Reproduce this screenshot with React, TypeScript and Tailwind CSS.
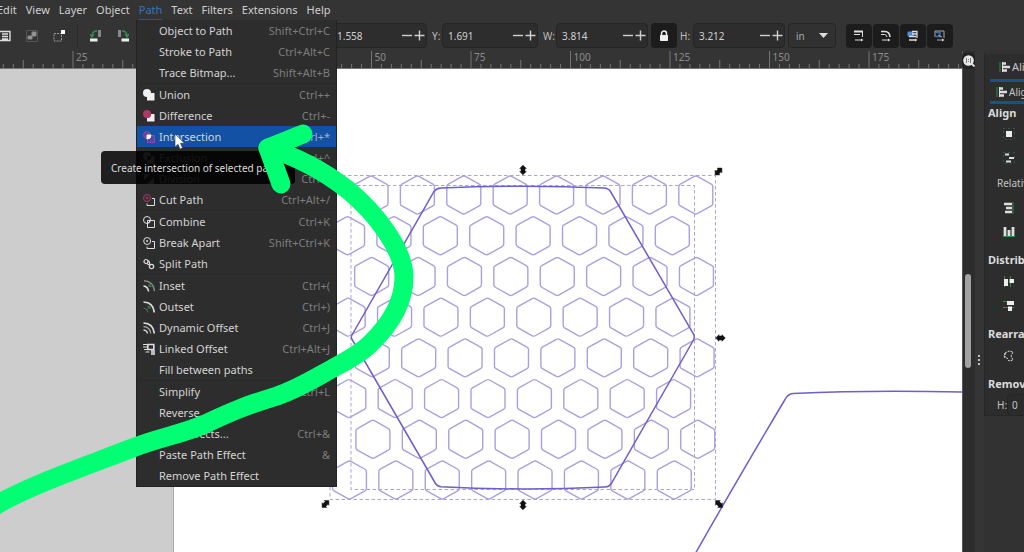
import type { ReactNode } from "react";

const SOFT = "#dedede";
const PINK = "#b03868";
const GREEN = "#2f8f4a";

function Icon({ children, className = "" }: { children: ReactNode; className?: string }) {
  return (
    <svg viewBox="0 0 12 12" width="12" height="12" fill="none" stroke={SOFT} className={"shrink-0 " + className} aria-hidden="true">
      {children}
    </svg>
  );
}

const menuIcons: Record<string, ReactNode> = {
  Union: (
    <g fill="#f0f0f0" stroke="none">
      <circle cx="4" cy="4" r="4" />
      <rect x="4" y="4" width="7.5" height="7.5" />
    </g>
  ),
  Difference: (
    <g stroke="none">
      <path d="M8 4h3.500v7.500h-7.500v-3.500q4 0 4-4z" fill="#f0f0f0" />
      <circle cx="4" cy="4" r="4" fill={PINK} />
    </g>
  ),
  Intersection: (
    <g>
      <circle cx="4" cy="4" r="3.500" fill="#6b3f9c" stroke="#a84a9c" strokeDasharray="2 .6" />
      <path d="M8.500 4.500h3v7h-7v-3" fill="#4a4aa8" stroke="#a84a9c" strokeDasharray="2 .6" />
      <path d="M4 4h4q0 4-4 4z" fill="#fff" stroke="#fff" />
    </g>
  ),
  Exclusion: (
    <g stroke="none" fill="#8a8a8a">
      <path d="M4 0a4 4 0 0 1 4 4h-4v4a4 4 0 0 1 0-8z" />
      <path d="M8.500 4h3v7.500h-7.500v-3q4.500 0 4.500-4.500z" />
    </g>
  ),
  Division: (
    <g stroke="none" fill="#8a8a8a">
      <path d="M1 1h6l-6 6zM11 4v7h-7z" />
    </g>
  ),
  "Cut Path": (
    <g>
      <circle cx="4" cy="4" r="3.500" stroke={PINK} />
      <circle cx="4" cy="4" r="1" stroke={PINK} />
      <path d="M9 4.500h2.500v7h-7.500v-2" />
    </g>
  ),
  Combine: (
    <g>
      <circle cx="4" cy="4" r="3.500" />
      <path d="M4.500 4.500h7v7h-7z" />
      <path d="M4.500 7.500l3-3" />
    </g>
  ),
  "Break Apart": (
    <g>
      <circle cx="4.200" cy="4" r="3.500" />
      <circle cx="4.200" cy="4" r=".7" />
      <path d="M9 4.500h2.500v7h-7.500v-2" />
    </g>
  ),
  "Split Path": (
    <g strokeWidth="1.200">
      <circle cx="3" cy="3.500" r="2" />
      <circle cx="8.500" cy="8.500" r="2.200" />
      <path d="M5 2.500q2 1 1.500 4M3.500 5.500l3 1.500" />
    </g>
  ),
  Inset: (
    <g>
      <path d="M1 .8q9.500.5 10.500 10.500" stroke="#858585" strokeWidth="1.400" />
      <path d="M.5 6q4.500.5 5 5.500" strokeWidth="1.600" />
      <path d="M9 3.500l-3 3m0-2.500v2.500h2.500" stroke={GREEN} />
    </g>
  ),
  Outset: (
    <g>
      <path d="M.5 1q10 .5 10.800 10.500" strokeWidth="1.600" />
      <path d="M.5 7q4 .5 4.500 4.500" stroke="#666" />
      <path d="M4 8.500l3-3m0 2.500v-2.500h-2.500" stroke={GREEN} />
    </g>
  ),
  "Dynamic Offset": (
    <g>
      <path d="M.5 1q10 .5 10.800 10.500" strokeWidth="1.600" />
      <path d="M.5 4.500q6.500.5 7.300 7" stroke="#a5a5a5" strokeWidth="1.300" />
      <path d="M.5 8q3.500.3 4 3.500" strokeWidth="1.300" />
    </g>
  ),
  "Linked Offset": (
    <g>
      <path d="M4.800 1.500h6v5h-6zM9 7v5M11 7v5" strokeWidth="1.600" />
      <path d="M0 1.500h4M0 4h4M1 6.500h4M2.500 9h4" />
    </g>
  ),
};

type Entry = { label: string; keys?: string; dim?: boolean; active?: boolean };

const menuGroups: Entry[][] = [
  [
    { label: "Object to Path", keys: "Shift+Ctrl+C" },
    { label: "Stroke to Path", keys: "Ctrl+Alt+C" },
    { label: "Trace Bitmap...", keys: "Shift+Alt+B" },
  ],
  [
    { label: "Union", keys: "Ctrl++" },
    { label: "Difference", keys: "Ctrl+-" },
    { label: "Intersection", keys: "Ctrl+*", active: true },
    { label: "Exclusion", keys: "Ctrl+^", dim: true },
    { label: "Division", keys: "Ctrl+/", dim: true },
    { label: "Cut Path", keys: "Ctrl+Alt+/" },
  ],
  [
    { label: "Combine", keys: "Ctrl+K" },
    { label: "Break Apart", keys: "Shift+Ctrl+K" },
    { label: "Split Path" },
  ],
  [
    { label: "Inset", keys: "Ctrl+(" },
    { label: "Outset", keys: "Ctrl+)" },
    { label: "Dynamic Offset", keys: "Ctrl+J" },
    { label: "Linked Offset", keys: "Ctrl+Alt+J" },
    { label: "Fill between paths" },
  ],
  [
    { label: "Simplify", keys: "Ctrl+L" },
    { label: "Reverse" },
    { label: "Path Effects...", keys: "Ctrl+&" },
    { label: "Paste Path Effect", keys: "&" },
    { label: "Remove Path Effect" },
  ],
];

function PathMenu() {
  return (
    <div role="menu" aria-label="Path" className="absolute left-[136px] top-5 z-10 w-[201px] border-x border-b border-[#222] bg-[#2d2d2d]">
      {menuGroups.map((group, i) => (
        <div key={i} className={i > 0 ? "border-t border-[#292929]" : ""}>
          {group.map((e) => (
            <button
              key={e.label}
              role="menuitem"
              className={
                "flex h-[21px] w-full items-center pl-1.5 pr-1.5 text-left " +
                (e.active ? "bg-[#1251a3]" : "")
              }
            >
              <span className="w-4 shrink-0">{menuIcons[e.label] && <Icon>{menuIcons[e.label]}</Icon>}</span>
              <span className={"flex-1 whitespace-nowrap " + (e.dim ? "text-[#8a8a8a]" : "text-[#d4d4d4]")}>{e.label}</span>
              <span className={e.active ? "text-[#9ab0cc]" : "text-[#7d7d7d]"}>{e.keys}</span>
            </button>
          ))}
        </div>
      ))}
    </div>
  );
}

function SpinBox({ id, label, value, wide = false }: { id: string; label: string; value: string; wide?: boolean }) {
  return (
    <div className="flex items-center">
      <label htmlFor={id} className={"whitespace-nowrap text-[#bdbdbd] " + (wide ? "w-[10px]" : "w-[13px]")}>{label}</label>
      <div className={"flex h-[25px] items-center rounded border border-[#252525] bg-[#2d2d2d] " + (wide ? "w-[96px]" : "w-[92px]")}>
        <input id={id} defaultValue={value} className="w-0 flex-1 bg-transparent pl-[5px] text-[#d0d0d0] outline-none" />
        <button aria-label={"Decrease " + label} className="flex h-full w-3 items-center justify-center">
          <svg width="11" height="11" stroke="#cfcfcf" strokeWidth="1.400" aria-hidden="true"><path d="M0 5.500h10" /></svg>
        </button>
        <button aria-label={"Increase " + label} className="flex h-full w-[13px] items-center justify-center">
          <svg width="11" height="11" stroke="#cfcfcf" strokeWidth="1.400" aria-hidden="true"><path d="M.5 5.500h10M5.500 .5v10" /></svg>
        </button>
      </div>
    </div>
  );
}

const scaleIcons: { name: string; art: ReactNode }[] = [
  { name: "Scale stroke width", art: <><path d="M1 1.500h9" strokeWidth="2" /><path d="M1 4.500h6M9.500 2v5M2 10h7" /></> },
  { name: "Scale rounded corners", art: <><path d="M1 1.500h4q4.500 0 5 5.500" strokeWidth="1.600" /><path d="M1 4.500h3.500q2 0 2.500 2.500M2 10h7" /></> },
  { name: "Move gradients", art: <><path d="M1 2h5v4h-5z" fill="#4f8de0" stroke="#4f8de0" /><path d="M5 1.500h5.500M5 4h5M2 6.500h7M10 1v7M2 10h7" strokeWidth="1.300" /></> },
  { name: "Move patterns", art: <><path d="M2 2.500h4v4h-4" stroke="#3d6fb5" strokeWidth="1.500" /><path d="M1 1h9v7M1 1v6M3 10h6M4 5l4 2" stroke="#aaa" /></> },
];

function Toolbar() {
  return (
    <div className="flex h-[31px] items-center overflow-hidden bg-[#343434] text-[10px]">
      <div className="flex w-[321px] shrink-0 items-center">
        <button aria-label="Select all" className="flex w-[19px] justify-center pr-2">
          <Icon><path d="M0 1.500h10v9h-10M2 4h6M2 6.500h6M2 9h6" strokeWidth="1.400" /></Icon>
        </button>
        <button aria-label="Select in layers" className="flex w-[26px] justify-center">
          <Icon>
            <path d="M.5 .5h11v11h-11z" stroke="#555" />
            <path d="M6 2h4v4h-4zM2 6h4v3h-4z" fill="#999" stroke="#888" />
          </Icon>
        </button>
        <button aria-label="Deselect" className="flex w-[27px] justify-center">
          <Icon>
            <path d="M1 3.500h7.500v7.500h-7.500z" stroke="#999" strokeDasharray="2 1" />
            <path d="M8 0h4v4h-4z" fill="#fff" stroke="none" />
          </Icon>
        </button>
        <span className="ml-[5px] h-6 border-l border-[#2b2b2b]" />
        <button aria-label="Rotate left" className="ml-3 flex w-3 justify-center">
          <Icon>
            <path d="M8 0h3v7h-3z" fill="#888" stroke="none" />
            <path d="M7 1q-5 0-5 5M0 4l2 3 2-3" stroke={GREEN} strokeWidth="1.300" />
            <path d="M0 8.500h7.500v3h-7.500z" fill="#eee" stroke="none" />
          </Icon>
        </button>
        <button aria-label="Rotate right" className="ml-[15px] flex w-3 justify-center">
          <Icon>
            <path d="M1 0h3v7h-3z" fill="#888" stroke="none" />
            <path d="M5 1q5 0 5 5M8 4l2 3 2-3" stroke={GREEN} strokeWidth="1.300" />
            <path d="M4.500 8.500h7.500v3h-7.500z" fill="#eee" stroke="none" />
          </Icon>
        </button>
      </div>
      <div className="flex shrink-0 items-center">
        <div className="flex gap-[5px]">
          <SpinBox id="x" label="X:" value="1.558" wide />
          <SpinBox id="y" label="Y:" value="1.691" wide />
          <SpinBox id="w" label="W:" value="3.814" />
        </div>
        <button aria-label="Lock width and height" className="mx-[3px] flex h-[25px] w-[26px] items-center justify-center rounded bg-[#1c1c1c]">
          <svg width="10" height="12" viewBox="0 0 10 12" aria-hidden="true">
            <path d="M2.500 6v-2.500a2.500 2.500 0 0 1 5 0v2.500" fill="none" stroke="#eee" strokeWidth="1.500" />
            <rect x="1" y="5" width="8" height="6" rx=".8" fill="#eee" />
          </svg>
        </button>
        <SpinBox id="h" label="H:" value="3.212" />
        <div className="relative ml-[3px] flex items-center">
          <select aria-label="Units" className="h-[25px] w-12 appearance-none rounded border border-[#252525] bg-[#313131] pl-[7px] text-[#a8a8a8] outline-none">
            <option>in</option>
          </select>
          <svg width="9" height="5" className="pointer-events-none absolute right-2" aria-hidden="true"><path d="M0 0h9l-4.500 5z" fill="#ddd" /></svg>
        </div>
        <div className="ml-[10px] flex gap-px">
          {scaleIcons.map((s) => (
            <button key={s.name} aria-label={s.name} className="flex h-6 w-[26px] items-center justify-center rounded-sm bg-[#1c1c1c]">
              <Icon>{s.art}<path d="M8 8.500l2.500 1.500-2.500 1.500" fill={SOFT} stroke="none" /></Icon>
            </button>
          ))}
        </div>
      </div>
    </div>
  );
}

const ORIGIN = 172.5;
const STEP = 9.95;

function Ruler() {
  const ticks = Array.from({ length: 97 }, (_, i) => i - 17);
  return (
    <svg className="block h-[18px] w-full border-b border-[#777] bg-[#343434]" aria-hidden="true">
      {ticks.map((t) => {
        const x = ORIGIN + t * STEP;
        const top = t % 10 === 0 ? 0 : t % 5 === 0 ? 9 : 13;
        return <path key={t} d={`M${x} ${top}V18`} stroke="#757575" />;
      })}
      {ticks.filter((t) => t % 10 === 0).map((t) => (
        <text key={t} x={ORIGIN + t * STEP + 3} y="10" fontSize="10" fill="#8c8c8c">
          {Math.abs(t * 2.5)}
        </text>
      ))}
    </svg>
  );
}

const HEX = "M-1.500-18.600Q0-19.400 1.500-18.600L15.500-10.800Q17-10 17-8.400V8.400Q17 10 15.500 10.800L1.500 18.600Q0 19.400-1.500 18.600L-15.500 10.800Q-17 10-17 8.400V-8.400Q-17-10-15.500-10.800Z";
const H_ARROW = "M-4.800 0l3.300-3.300v1.300h3v-1.300l3.300 3.300-3.300 3.300v-1.300h-3v1.300z";

const handles = [
  [523, 170, 90],
  [718.500, 171.500, -45],
  [720.500, 338, 0],
  [719, 504, 45],
  [523, 505, 90],
  [325.500, 504, -45],
];

function Drawing() {
  const cells = Array.from({ length: 64 }, (_, i) => ({ row: Math.floor(i / 8), col: i % 8 }));
  return (
    <svg className="absolute inset-0 h-full w-full" fill="none" aria-label="Hexagon pattern">
      <g transform="translate(0 -69)">
        <g stroke="#aaa0de" strokeWidth="1.400">
          {cells.map(({ row, col }) => {
            const x = (row % 2 ? 347.2 : 371) + row * 0.32 + col * 46.4;
            return <path key={row * 8 + col} d={HEX} transform={`translate(${x} ${195 + row * 40.72})`} />;
          })}
        </g>
        <g stroke="#a9a5d2" strokeDasharray="3.500 2.500">
          <path d="M330 175.500H715.500V499.500H330Z" />
          <path d="M351 185.500H694.500V489.500H351Z" />
        </g>
        <g stroke="#6c60cc" strokeWidth="1.500">
          <path d="M351.500 338.500Q351 337 352 335L434 191.500Q436.500 188.300 441 188Q523 184.500 604 188Q608.500 188.300 610.500 191.500L693.500 334Q695 337 693.500 340L611 484Q609 486.800 605 487Q523 491 441 486.800Q437.500 486.500 435.500 483.500L353 341Z" />
          <path d="M690 563Q730 492 785 399.500Q788 394 793 393.500Q880 389.500 975 392.500" />
        </g>
        <g fill="#111" stroke="#111" strokeWidth=".5" strokeLinejoin="round">
          {handles.map(([x, y, a]) => (
            <path key={`${x}-${y}`} d={H_ARROW} transform={`translate(${x} ${y}) rotate(${a})`} />
          ))}
        </g>
      </g>
    </svg>
  );
}

function PanelIcon({ children, label }: { children: ReactNode; label: string }) {
  return (
    <button aria-label={label} className="ml-[18px] flex h-6 items-center">
      <Icon>{children}</Icon>
    </button>
  );
}

function PanelHeading({ children }: { children: ReactNode }) {
  return <h2 className="mt-[6px] pl-[3px] font-bold leading-5 text-[#dcdcdc]">{children}</h2>;
}

const alignGlyph = (
  <>
    <path d="M1 1v10" stroke={GREEN} />
    <path d="M3 2.500h4M3 6h8M3 9.500h5" strokeWidth="2.400" />
    <path d="M3.500 1v10" strokeWidth="1" />
  </>
);

function AlignPanel() {
  return (
    <aside className="mt-[3px] w-10 shrink-0 overflow-hidden whitespace-nowrap">
      <div className="h-[362px] border-b border-l border-[#262626] bg-[#2d2d2d] text-[#c4c4c4]">
        <div className="ml-[5px] flex h-7 items-center border-b-[3px] border-[#1c4f92] pl-[9px]">
          <Icon className="mr-px">{alignGlyph}</Icon>
          <span>Align and Distribute</span>
        </div>
        <div className="ml-[5px] flex h-[22px] items-center border-b-[3px] border-[#1c4f92] pl-1.5 text-[10px]">
          <Icon className="mr-px">{alignGlyph}</Icon>
          <span>Align</span>
        </div>
        <h2 className="pl-[3px] font-bold leading-[18px] text-[#dcdcdc]">Align</h2>
        <PanelIcon label="Align to area">
          <path d="M.5 .5h11v11h-11z" stroke={GREEN} strokeDasharray="1 4" />
          <path d="M3 3h6v6h-6z" fill="#eee" stroke="none" />
        </PanelIcon>
        <PanelIcon label="Move as group">
          <path d="M.5 .5h11v11h-11z" stroke={GREEN} strokeDasharray="1 4" />
          <path d="M2 2.500h4M6 6h5M3 9.500h5" strokeWidth="1.800" />
        </PanelIcon>
        <p className="pl-3 text-[10px] leading-[26px]">Relative to:</p>
        <PanelIcon label="Align edges">
          <path d="M10 0v12" stroke={GREEN} />
          <path d="M1 2h8M3 6h6M2 10h7" strokeWidth="2.500" />
        </PanelIcon>
        <PanelIcon label="Align bottoms">
          <path d="M0 10.500h12" stroke={GREEN} />
          <path d="M2 1v9M6 4v6M10 1v9" strokeWidth="2.800" />
        </PanelIcon>
        <PanelHeading>Distribute</PanelHeading>
        <PanelIcon label="Distribute horizontally">
          <path d="M1.500 0v11M7.500 0v11" stroke={GREEN} />
          <path d="M1 3h4v7h-4zM6.500 3h4.500v4h-4.500z" fill="#eee" stroke="none" />
        </PanelIcon>
        <PanelIcon label="Distribute vertically">
          <path d="M0 1.500h11M0 7.500h11" stroke={GREEN} />
          <path d="M4 1h7v4h-7zM5 6.500h4v4.500h-4z" fill="#eee" stroke="none" />
        </PanelIcon>
        <PanelHeading>Rearrange</PanelHeading>
        <PanelIcon label="Rearrange graph">
          <path d="M2 3l4-2 4 1-2 4 2 4-4 1-2-3-3-1zM2 3v4" strokeDasharray="2 1" />
        </PanelIcon>
        <PanelHeading>Remove overlaps</PanelHeading>
        <div className="flex items-center pl-3 text-[10px]">
          <label htmlFor="gap-h" className="w-[11px]">H:</label>
          <input id="gap-h" defaultValue="0" className="h-[22px] w-20 rounded border border-[#252525] bg-[#2b2b2b] pl-1 outline-none" />
        </div>
      </div>
    </aside>
  );
}

const menus = ["Edit", "View", "Layer", "Object", "Path", "Text", "Filters", "Extensions", "Help"];

export default function App() {
  return (
    <div className="relative flex min-h-screen flex-col overflow-hidden bg-[#323232] font-['Noto_Sans',sans-serif] text-[11px] leading-4">
      <nav className="-ml-[3px] flex h-5 items-center gap-[9px] bg-[#343434] text-[#cfcfcf]">
        {menus.map((m) => (
          <button key={m} className={m === "Path" ? "h-5 border-b border-[#24588f] pt-px text-[#3675bd]" : "h-5 border-b border-transparent pt-px"}>
            {m}
          </button>
        ))}
      </nav>
      <Toolbar />
      <div className="flex flex-1">
        <main className="flex min-w-0 flex-1 flex-col">
          <Ruler />
          <div className="relative flex flex-1 bg-[#cdcdcd] pl-[173px]">
            <div className="flex-1 border-l border-[#aaa] bg-white" />
            <Drawing />
          </div>
        </main>
        <div className="relative w-[13px] shrink-0 border-l border-[#555] bg-[#2d2d2d]">
          <button aria-label="Zoom to fit" className="absolute -left-px top-0.5 flex h-4 w-[13px] items-center justify-center rounded bg-[#222]">
            <svg width="12" height="12" viewBox="0 0 12 12" aria-hidden="true">
              <circle cx="5.500" cy="5.500" r="5.300" fill="#e8e8e8" />
              <path d="M9 9l2.500 2.500" stroke="#e8e8e8" strokeWidth="1.800" />
              <path d="M3.500 3v5M7.500 3v5M5.500 4v1M5.500 6v1" stroke="#777" />
            </svg>
          </button>
          <div className="absolute left-0.5 top-[223px] h-[94px] w-1.5 rounded-full bg-[#a2a2a2]" />
        </div>
        <div className="relative w-[9px] shrink-0 bg-[#353535]">
          <svg width="3" height="12" className="absolute left-[3px] top-[304px]" fill="#bbb" aria-hidden="true">
            <path d="M0 0h2v2h-2zM0 4h2v2h-2zM0 8h2v2h-2z" />
          </svg>
        </div>
        <AlignPanel />
      </div>
      <PathMenu />
      <div role="tooltip" className="absolute left-[101px] top-[151px] z-20 flex h-[33px] w-[194px] items-center whitespace-nowrap rounded-sm bg-black/85 pl-2.5 text-[10px] text-[#dcdcdc]">
        Create intersection of selected paths
      </div>
      <svg className="pointer-events-none absolute inset-0 z-30 h-full w-full" fill="none" aria-hidden="true">
        <path d="M175 134v13l3-2.700 2 4.700 2.500-1-2-4.700h4z" fill="#fff" stroke="#333" strokeWidth=".6" />
        <g stroke="#00ff73" strokeWidth="19" strokeLinecap="round" strokeLinejoin="round">
          <path d="M-8 508C18 490 75 470 130 449C160 437 180 435 205 424C235 410 245 406 277 396C300 388 315 378 337 366C350 359 362 352 370 344C392 323 404 300 404 277C404 250 376 213 348 190C325 172 298 157 268 148" />
          <path d="M303 134L268 148L281 184" />
        </g>
      </svg>
    </div>
  );
}
